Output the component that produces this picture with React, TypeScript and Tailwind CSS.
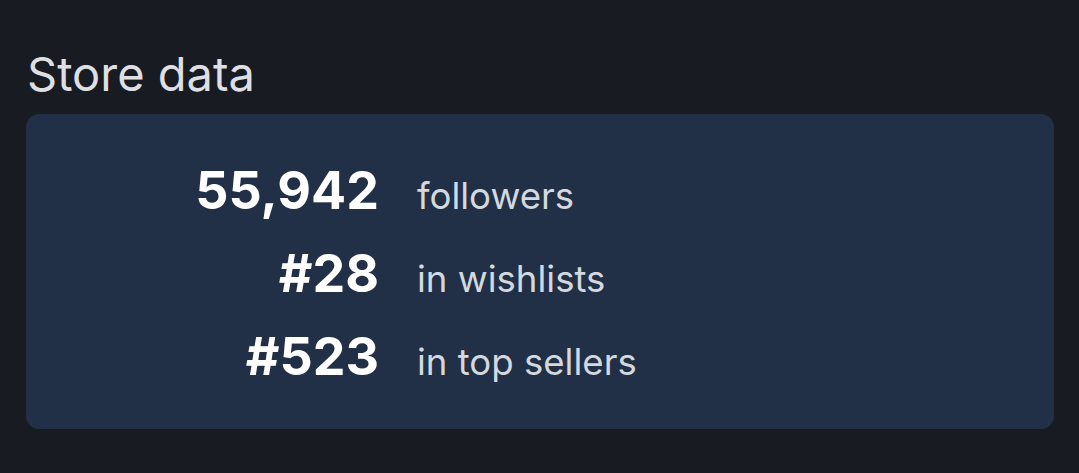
export default function App() {
  const rows = [
    { n: "55,942", l: "followers" },
    { n: "#28", l: "in wishlists" },
    { n: "#523", l: "in top sellers" },
  ];
  return (
    <div className="w-[1079px] h-[473px] bg-[#181b22] pl-[26px] pr-[25px] pt-[46px]" style={{ fontFamily: "Inter, 'Noto Sans', sans-serif" }}>
      <h2 className="text-[47px] leading-[56px] text-[#dedfe2] pl-[1px] mb-[12px]">Store data</h2>
      <div className="bg-[#213046] rounded-[13px] h-[315px] pt-[38px]">
        <div className="grid grid-cols-[353px_1fr] gap-x-[38px] gap-y-0 items-baseline">
          {rows.map((r) => (
            <div key={r.n} className="contents">
              <div className="text-right text-[52px] font-bold text-white leading-[78px]">{r.n}</div>
              <div className="text-[36.6px] text-[#d4d8df] leading-[78px]">{r.l}</div>
            </div>
          ))}
        </div>
      </div>
    </div>
  );
}
